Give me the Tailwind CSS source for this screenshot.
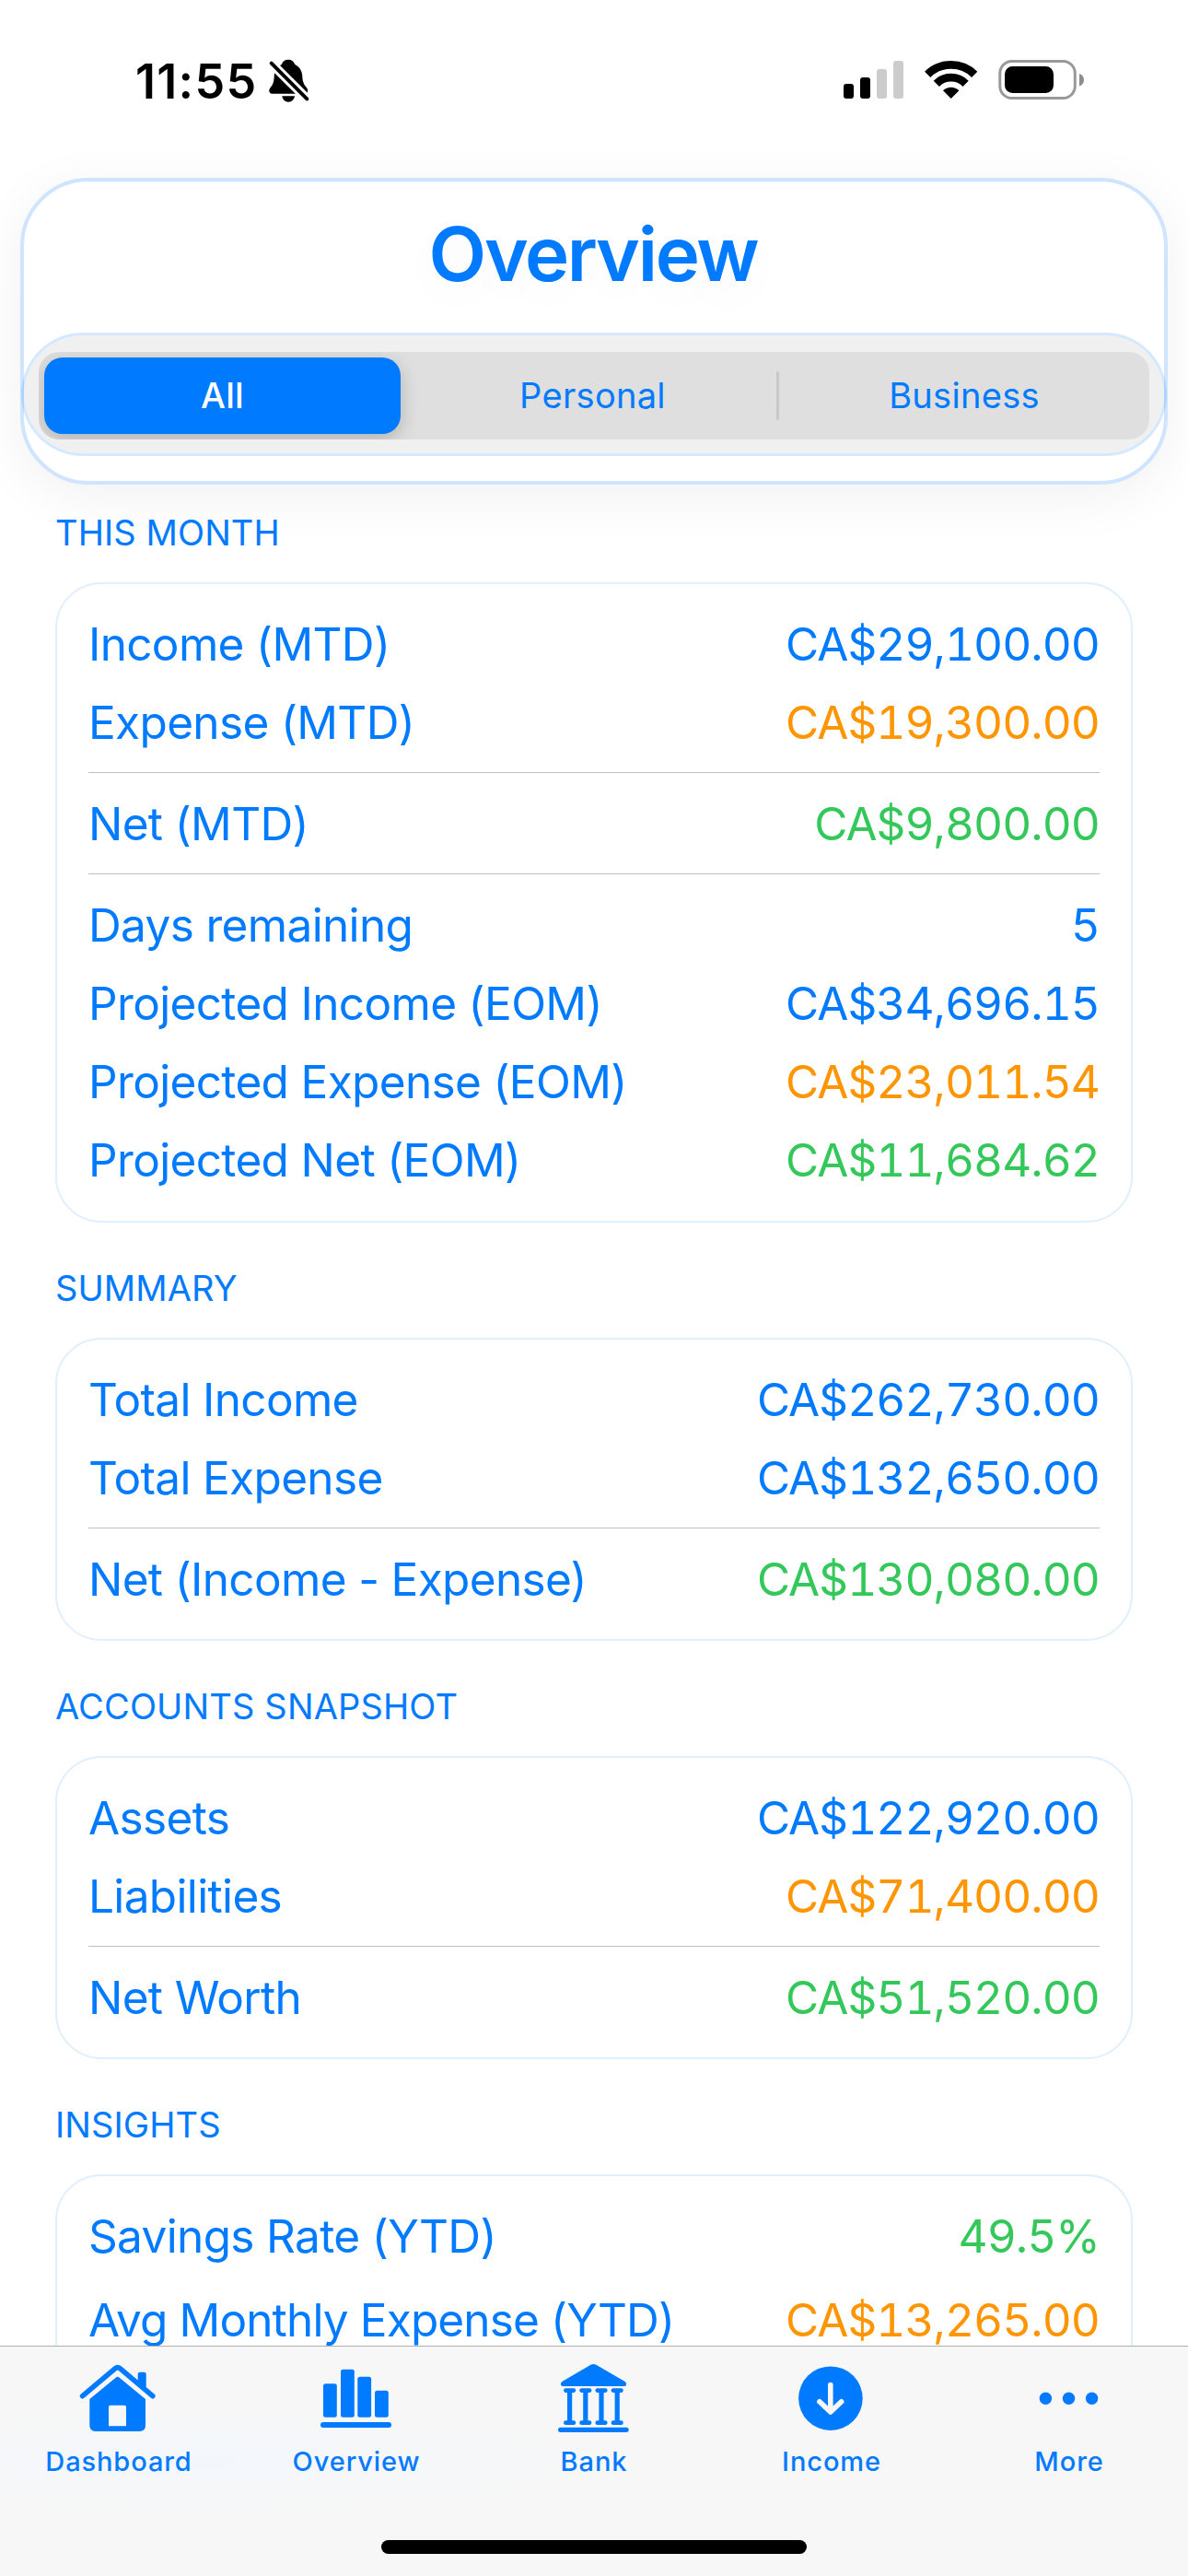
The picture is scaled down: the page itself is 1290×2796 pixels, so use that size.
<!DOCTYPE html>
<html lang="en">
<head>
    <meta charset="UTF-8">
    <meta name="viewport" content="width=device-width, initial-scale=1.0">
    <title>Overview</title>
    <script src="https://cdn.jsdelivr.net/npm/@tailwindcss/browser@4"></script>
</head>
<body class="flex flex-col w-[1290px] h-[2796px] overflow-hidden bg-white font-['Inter','Liberation_Sans',sans-serif] text-[#007aff]">

    <!-- Status Bar -->
    <div class="flex shrink-0 items-start h-[193px] pt-14 pl-[147px] pr-[110px] text-black">
        <span class="w-[143px] mt-px text-[52px] leading-[64px] font-semibold tracking-[1.3px]">11:55</span>
        <svg class="mt-1.5" width="48" height="52" viewBox="0 0 48 52">
            <path d="M23 2.7c-3.800 0-6.300 2-7 5C10.500 10.500 8 15 7.700 21c-.3 6.500-1.500 9-4.200 12.200C1.500 35.600 2 39.700 5.500 39.700h35.500c3.500 0 4-4.100 2-6.500-2.700-3.200-4.400-5.700-4.700-12.200C38 15 35.500 10.500 30 7.700c-.7-3-3.200-5-7-5z"/>
            <path d="M16.300 42.300h13.700c-.7 4-3.500 6.400-6.850 6.400s-6.150-2.400-6.850-6.400z"/>
            <path d="M4.700 6.700L43.300 45.300" stroke="#fff" stroke-width="10"/>
            <path d="M4.700 6.700L43.300 45.300" stroke="#000" stroke-width="4" stroke-linecap="round"/>
        </svg>
        <svg class="mt-1 ml-auto" width="270" height="52" viewBox="0 0 270 52">
            <!-- signal -->
            <rect x="6" y="31" width="11" height="16" rx="3"/>
            <rect x="24" y="24" width="11" height="23" rx="3"/>
            <rect x="42" y="15" width="11" height="32" rx="3" fill="#ccc"/>
            <rect x="60" y="6" width="11" height="41" rx="3" fill="#ccc"/>
            <!-- wifi -->
            <g fill="none" stroke="#000" stroke-width="8.800">
                <path d="M97.200 20.800A36.500 36.500 0 0 1 148.200 20.800"/>
                <path d="M106.800 30.800A22.500 22.500 0 0 1 138.600 30.800"/>
            </g>
            <path d="M122.700 47l-8.700-8.700a12.500 12.500 0 0 1 17.400 0z"/>
            <!-- battery -->
            <rect x="175.800" y="6.500" width="81.500" height="40" rx="13" fill="none" stroke="#999" stroke-width="3"/>
            <rect x="181" y="12" width="53" height="29" rx="8.500"/>
            <path d="M262 20v13.500c3-1 5-3.700 5-6.750s-2-5.750-5-6.750z" fill="#8c8c8c"/>
        </svg>
    </div>

    <!-- Header -->
    <div class="relative shrink-0 h-[333px] mx-[22px] pt-[29px] rounded-[74px] border-4 border-[#cfe4fe] bg-white shadow-[0_12px_60px_rgba(0,0,0,0.06)]">
        <h1 class="text-center text-[81.5px] leading-[100px] font-semibold tracking-[-2.3px] -ml-0.5 [text-shadow:0_12px_50px_rgba(0,0,0,0.04)]">Overview</h1>
        <div class="h-[134px] mt-[35px] -mx-[3px] pt-[18px] px-4 rounded-full border-[3px] border-[#007aff]/17 bg-black/6 bg-clip-padding">
            <div class="grid grid-cols-3 h-[95px] rounded-[22px] bg-[#dfdfe0] text-[38px] tracking-[0.3px] overflow-hidden">
                <div class="py-1.5 pl-1.5 pr-[9px]">
                    <div class="flex items-center justify-center h-full rounded-[20px] bg-[#007aff] text-white font-medium shadow-[0_6px_20px_rgba(0,0,0,0.2)]">All</div>
                </div>
                <div class="flex items-center">
                    <span class="flex-1 text-center">Personal</span>
                    <span class="w-[3px] h-[53px] rounded-full bg-[#c8c8ca]"></span>
                </div>
                <div class="flex items-center justify-center">Business</div>
            </div>
        </div>
    </div>

    <!-- Main -->
    <div class="relative flex-1 min-h-0 px-[60px] pt-7 overflow-hidden">
        <h2 class="text-[38px] leading-[48px] tracking-[0.1px]">THIS MONTH</h2>
        <div class="flex flex-col gap-6 mt-[30px] px-[34px] py-[35px] rounded-[50px] border-2 border-[#e0effe] text-[49.5px] leading-[61px] tracking-[-0.65px]">
            <div class="flex justify-between"><span>Income (MTD)</span><span class="tabular-nums tracking-[-0.95px]">CA$29,100.00</span></div>
            <div class="flex justify-between"><span>Expense (MTD)</span><span class="tabular-nums tracking-[-0.95px] text-[#ff9500]">CA$19,300.00</span></div>
            <div class="h-px -mt-px mb-px bg-[#b8c2cb]"></div>
            <div class="flex justify-between"><span>Net (MTD)</span><span class="tabular-nums tracking-[-0.95px] text-[#34c759]">CA$9,800.00</span></div>
            <div class="h-px -mt-px mb-px bg-[#b8c2cb]"></div>
            <div class="flex justify-between"><span>Days remaining</span><span class="tabular-nums tracking-[-0.95px]">5</span></div>
            <div class="flex justify-between"><span>Projected Income (EOM)</span><span class="tabular-nums tracking-[-0.95px]">CA$34,696.15</span></div>
            <div class="flex justify-between"><span>Projected Expense (EOM)</span><span class="tabular-nums tracking-[-0.95px] text-[#ff9500]">CA$23,011.54</span></div>
            <div class="flex justify-between"><span>Projected Net (EOM)</span><span class="tabular-nums tracking-[-0.95px] text-[#34c759]">CA$11,684.62</span></div>
        </div>

        <h2 class="mt-[47px] text-[38px] leading-[48px] tracking-[0.1px]">SUMMARY</h2>
        <div class="flex flex-col gap-6 mt-[30px] px-[34px] pt-[35px] pb-[34px] rounded-[50px] border-2 border-[#e0effe] text-[49.5px] leading-[61px] tracking-[-0.65px]">
            <div class="flex justify-between"><span>Total Income</span><span class="tabular-nums tracking-[-0.95px]">CA$262,730.00</span></div>
            <div class="flex justify-between"><span>Total Expense</span><span class="tabular-nums tracking-[-0.95px]">CA$132,650.00</span></div>
            <div class="h-px -mt-px mb-px bg-[#b8c2cb]"></div>
            <div class="flex justify-between"><span>Net (Income - Expense)</span><span class="tabular-nums tracking-[-0.95px] text-[#34c759]">CA$130,080.00</span></div>
        </div>

        <h2 class="mt-[47px] text-[38px] leading-[48px] tracking-[0.15px]">ACCOUNTS SNAPSHOT</h2>
        <div class="flex flex-col gap-6 mt-[30px] px-[34px] pt-[35px] pb-[34px] rounded-[50px] border-2 border-[#e0effe] text-[49.5px] leading-[61px] tracking-[-0.65px]">
            <div class="flex justify-between"><span>Assets</span><span class="tabular-nums tracking-[-0.95px]">CA$122,920.00</span></div>
            <div class="flex justify-between"><span>Liabilities</span><span class="tabular-nums tracking-[-0.95px] text-[#ff9500]">CA$71,400.00</span></div>
            <div class="h-px -mt-px mb-px bg-[#b8c2cb]"></div>
            <div class="flex justify-between"><span>Net Worth</span><span class="tabular-nums tracking-[-0.95px] text-[#34c759]">CA$51,520.00</span></div>
        </div>

        <h2 class="mt-[47px] text-[38px] leading-[48px] tracking-[0.1px]">INSIGHTS</h2>
        <div class="flex flex-col gap-[30px] h-[400px] mt-[30px] px-[34px] py-[35px] rounded-[50px] border-2 border-[#e0effe] text-[49.5px] leading-[61px] tracking-[-0.65px]">
            <div class="flex justify-between"><span>Savings Rate (YTD)</span><span class="tabular-nums tracking-[-0.95px] text-[#34c759]">49.5%</span></div>
            <div class="flex justify-between"><span class="tracking-[-0.85px]">Avg Monthly Expense (YTD)</span><span class="tabular-nums tracking-[-0.95px] text-[#ff9500]">CA$13,265.00</span></div>
        </div>
    </div>

    <!-- Tab Bar -->
    <div class="relative shrink-0 h-[250px] border-t border-[#aeaeb0] bg-[#f7f7f7] bg-[radial-gradient(ellipse_at_17%_50%,#f3f7fc_0%,#f7f7f7_30%)]">
        <div class="grid grid-cols-5 pt-[13px] text-[29px] leading-9 font-medium tracking-[0.9px]">
            <div class="flex flex-col items-center gap-2.5">
                <svg width="90" height="84" viewBox="0 0 90 84" fill="#007aff">
                    <path d="M5.600 40.700L41.200 10.700Q43.700 8.600 46.200 10.700L81.800 40.700" fill="none" stroke="#007aff" stroke-width="5.600" stroke-linecap="round" stroke-linejoin="round"/>
                    <path d="M65.700 27V17q0-2.300 2.300-2.300h4.400q2.300 0 2.300 2.300V35z"/>
                    <path fill-rule="evenodd" d="M42 20.500q1.700-1.500 3.400 0L74 44v28.500q0 6.500-6.500 6.500H19.800q-6.500 0-6.500-6.500V44zM34 73.300h19V52.500q0-1.800-1.800-1.800H35.800q-1.800 0-1.800 1.800z"/>
                </svg>
                <span>Dashboard</span>
            </div>
            <div class="flex flex-col items-center gap-2.5">
                <svg width="90" height="84" viewBox="0 0 90 84" fill="#007aff">
                    <rect x="9" y="27.300" width="14.800" height="36.400" rx="2.500"/>
                    <rect x="28" y="11.700" width="14.800" height="52" rx="2.500"/>
                    <rect x="46.300" y="19.700" width="14.800" height="44" rx="2.500"/>
                    <rect x="65" y="34.700" width="14.800" height="29" rx="2.500"/>
                    <rect x="6" y="69" width="77" height="6" rx="3"/>
                </svg>
                <span>Overview</span>
            </div>
            <div class="flex flex-col items-center gap-2.5">
                <svg width="90" height="84" viewBox="0 0 90 84" fill="#007aff">
                    <path d="M41.500 6.800q2.900-1.600 5.800 0L78.300 24.700q1.700 1 1.700 2.700 0 2.600-2.600 2.600H11.600Q9 30 9 27.400q0-1.700 1.700-2.700z"/>
                    <rect x="12" y="32.200" width="13.200" height="4.800" rx="2.400"/>
                    <rect x="16" y="34" width="5.200" height="36"/>
                    <rect x="12" y="67.300" width="13.200" height="4.800" rx="2.400"/>
                    <rect x="29.200" y="32.200" width="13.200" height="4.800" rx="2.400"/>
                    <rect x="33.200" y="34" width="5.200" height="36"/>
                    <rect x="29.200" y="67.300" width="13.200" height="4.800" rx="2.400"/>
                    <rect x="46.400" y="32.200" width="13.200" height="4.800" rx="2.400"/>
                    <rect x="50.400" y="34" width="5.200" height="36"/>
                    <rect x="46.400" y="67.300" width="13.200" height="4.800" rx="2.400"/>
                    <rect x="63.600" y="32.200" width="13.200" height="4.800" rx="2.400"/>
                    <rect x="67.600" y="34" width="5.200" height="36"/>
                    <rect x="63.600" y="67.300" width="13.200" height="4.800" rx="2.400"/>
                    <rect x="6" y="74.700" width="76.700" height="5.300" rx="2.650"/>
                </svg>
                <span>Bank</span>
            </div>
            <div class="flex flex-col items-center gap-2.5">
                <svg width="90" height="84" viewBox="0 0 90 84">
                    <circle cx="43.900" cy="43.200" r="34.800" fill="#007aff"/>
                    <path d="M43.800 28.500v29.500M31.900 46.800L43.800 58l11.900-11.200" fill="none" stroke="#f7f7f7" stroke-width="5.600" stroke-linecap="round" stroke-linejoin="round"/>
                </svg>
                <span>Income</span>
            </div>
            <div class="flex flex-col items-center gap-2.5">
                <svg width="90" height="84" viewBox="0 0 90 84" fill="#007aff">
                    <circle cx="19.400" cy="43.300" r="6.700"/>
                    <circle cx="44.500" cy="43.300" r="6.700"/>
                    <circle cx="69.600" cy="43.300" r="6.700"/>
                </svg>
                <span>More</span>
            </div>
        </div>
        <!-- Home indicator -->
        <div class="w-[462px] h-[15px] mt-[67px] mx-auto rounded-full bg-black"></div>
    </div>

</body>
</html>
